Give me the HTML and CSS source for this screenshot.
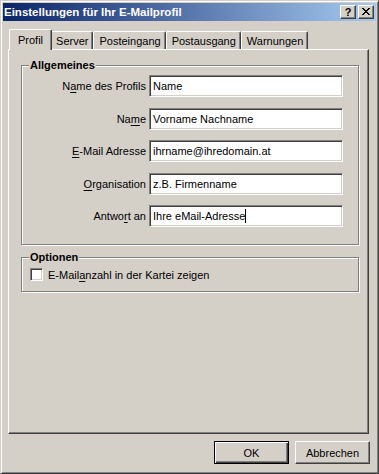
FILE: index.html
```html
<!DOCTYPE html>
<html lang="de">
<head>
    <meta charset="UTF-8">
    <title>Einstellungen für Ihr E-Mailprofil</title>
    <link rel="stylesheet" href="styles.css">
</head>
<body>
    <div class="window">
        <div class="titlebar">
            <span class="title">Einstellungen für Ihr E-Mailprofil</span>
            <div class="caption-buttons">
                <span class="cap-btn help">?</span>
                <span class="cap-btn close">
                    <svg width="8" height="7" viewBox="0 0 8 7" shape-rendering="crispEdges">
                        <rect x="0" y="0" width="2" height="1"/><rect x="6" y="0" width="2" height="1"/>
                        <rect x="1" y="1" width="2" height="1"/><rect x="5" y="1" width="2" height="1"/>
                        <rect x="2" y="2" width="4" height="1"/>
                        <rect x="3" y="3" width="2" height="1"/>
                        <rect x="2" y="4" width="4" height="1"/>
                        <rect x="1" y="5" width="2" height="1"/><rect x="5" y="5" width="2" height="1"/>
                        <rect x="0" y="6" width="2" height="1"/><rect x="6" y="6" width="2" height="1"/>
                    </svg>
                </span>
            </div>
        </div>

        <div class="tabs">
            <div class="tab active">Profil</div>
            <div class="tab">Server</div>
            <div class="tab">Posteingang</div>
            <div class="tab">Postausgang</div>
            <div class="tab">Warnungen</div>
        </div>

        <div class="panel">
            <div class="group general">
                <span class="group-title">Allgemeines</span>
                <div class="form-grid">
                    <span class="field-label">N<u>a</u>me des Profils</span>
                    <span class="textbox">Name</span>

                    <span class="field-label">Na<u>m</u>e</span>
                    <span class="textbox">Vorname Nachname</span>

                    <span class="field-label"><u>E</u>-Mail Adresse</span>
                    <span class="textbox">ihrname@ihredomain.at</span>

                    <span class="field-label"><u>O</u>rganisation</span>
                    <span class="textbox">z.B. Firmenname</span>

                    <span class="field-label">Antwo<u>r</u>t an</span>
                    <span class="textbox">Ihre eMail-Adresse<span class="caret"></span></span>
                </div>
            </div>

            <div class="group options">
                <span class="group-title">Optionen</span>
                <div class="check-row">
                    <span class="checkbox"></span>
                    <span>E-Mail<u>a</u>nzahl in der Kartei zeigen</span>
                </div>
            </div>
        </div>

        <div class="dialog-buttons">
            <button class="btn default">OK</button>
            <button class="btn">Abbrechen</button>
        </div>
    </div>
</body>
</html>
```

FILE: styles.css
```css
body {
    margin: 0;
    background-color: #d4d0c8;
    font-family: "Liberation Sans", Arial, sans-serif;
    font-size: 11px;
    color: #000;
}
u {
    text-underline-offset: 2px;
}
.window {
    width: 379px;
    height: 474px;
    box-sizing: border-box;
    padding: 2px;
    border: 1px solid;
    border-color: #d4d0c8 #404040 #404040 #d4d0c8;
    box-shadow: inset 1px 1px #fff, inset -1px -1px #808080;
    display: flex;
    flex-direction: column;
}
.titlebar {
    height: 18px;
    display: flex;
    align-items: center;
    justify-content: space-between;
    padding: 0 2px 0 1px;
    background: linear-gradient(to right, #0a246a, #a6caf0);
    color: #fff;
}
.title {
    font-weight: bold;
    font-size: 11.5px;
}
.caption-buttons {
    display: flex;
    gap: 2px;
}
.cap-btn {
    width: 16px;
    height: 14px;
    box-sizing: border-box;
    display: flex;
    align-items: center;
    justify-content: center;
    background-color: #d4d0c8;
    border: 1px solid;
    border-color: #fff #404040 #404040 #fff;
    box-shadow: inset -1px -1px #808080;
    color: #000;
}
.help {
    font-weight: bold;
    font-size: 11px;
    line-height: 1;
}
.close svg {
    fill: #000;
    margin-top: -1px;
}
.tabs {
    display: flex;
    align-items: flex-end;
    height: 20px;
    margin: 8px 0 0 6px;
}
.tab {
    height: 18px;
    box-sizing: border-box;
    padding: 2px 4px 0 5px;
    border: 1px solid;
    border-bottom: none;
    border-color: #fff #404040 #404040 #fff;
    border-radius: 2px 2px 0 0;
    box-shadow: inset -1px 0 #808080;
    line-height: 14px;
}
.tab.active {
    height: 21px;
    margin: 0 -2px -1px 0;
    padding: 3px 8px 0 8px;
    position: relative;
    z-index: 1;
    background-color: #d4d0c8;
}
.panel {
    height: 385px;
    box-sizing: border-box;
    margin: 0 7px 0 5px;
    padding: 15px 9px 0 12px;
    border: 1px solid;
    border-color: #fff #404040 #404040 #fff;
    box-shadow: inset -1px -1px #808080;
}
.group {
    position: relative;
    border: 1px solid #808080;
    box-shadow: inset 1px 1px #fff, 1px 1px #fff;
}
.group-title {
    position: absolute;
    top: -7px;
    left: 7px;
    padding: 0 1px;
    background-color: #d4d0c8;
    font-weight: bold;
    line-height: 13px;
}
.general {
    padding: 9px 15px 17px 0;
}
.form-grid {
    display: grid;
    grid-template-columns: 1fr 194px;
    column-gap: 3px;
    row-gap: 10.5px;
    align-items: center;
}
.field-label {
    text-align: right;
}
.textbox {
    height: 22px;
    box-sizing: border-box;
    padding: 2px 3px;
    display: flex;
    align-items: center;
    background-color: #fff;
    border: 1px solid;
    border-color: #808080 #fff #fff #808080;
    box-shadow: inset 1px 1px #404040, inset -1px -1px #d4d0c8;
    white-space: nowrap;
}
.caret {
    display: inline-block;
    width: 1px;
    height: 14px;
    background-color: #000;
}
.options {
    margin-top: 12px;
    padding: 10px 0 10px 8px;
}
.check-row {
    display: flex;
    align-items: center;
    gap: 5px;
    height: 13px;
}
.checkbox {
    width: 13px;
    height: 13px;
    box-sizing: border-box;
    background-color: #fff;
    border: 1px solid;
    border-color: #808080 #fff #fff #808080;
    box-shadow: inset 1px 1px #404040, inset -1px -1px #d4d0c8;
}
.dialog-buttons {
    display: flex;
    justify-content: flex-end;
    gap: 6px;
    margin-top: 7px;
    padding-right: 6px;
}
.btn {
    width: 75px;
    height: 23px;
    box-sizing: border-box;
    padding: 0;
    font-family: "Liberation Sans", Arial, sans-serif;
    font-size: 11px;
    color: #000;
    background-color: #d4d0c8;
    border: 1px solid;
    border-color: #fff #404040 #404040 #fff;
    box-shadow: inset -1px -1px #808080;
}
.btn.default {
    border-color: #000;
    box-shadow: inset 1px 1px #fff, inset -1px -1px #404040, inset -2px -2px #808080;
}
```
